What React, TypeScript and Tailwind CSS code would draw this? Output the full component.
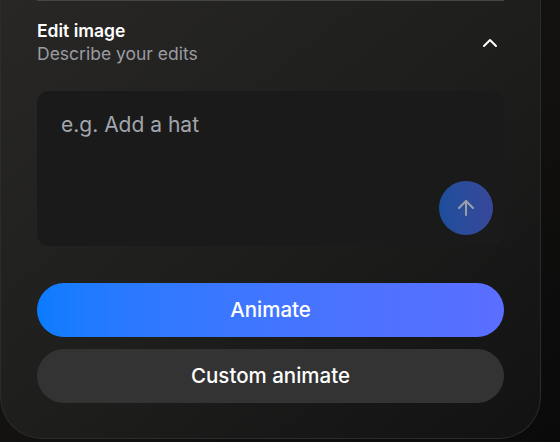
import { ArrowUp, ChevronUp } from "lucide-react";

export default function App() {
  return (
    <main
      className="h-[442px] w-[560px] overflow-hidden bg-gradient-to-br from-[#1d1a17] to-[#0a0a0a]"
      style={{ fontFamily: "Inter, 'Noto Sans', sans-serif" }}
    >
      <section className="flex h-[439px] w-[541px] flex-col rounded-b-[42px] border-x border-b border-[#2c2c2c] bg-gradient-to-br from-[#282725] via-[#1e1e1d] to-[#121212] px-9">
        <div className="h-px bg-[#454545]" />

        <div className="mt-[19px] flex items-center justify-between">
          <div>
            <h2 className="text-[17.5px] font-semibold leading-[22px] text-white">
              Edit image
            </h2>
            <p className="text-[17.5px] leading-[24px] text-[#9a9ca2]">
              Describe your edits
            </p>
          </div>
          <ChevronUp className="mr-[2px] h-6 w-6 text-white" strokeWidth={2} />
        </div>

        <div className="mt-[25px] flex h-[155px] flex-col rounded-xl bg-[#1a1a1a] px-6 pt-[20px] pb-[11px]">
          <p className="text-[21px] leading-[28px] text-[#a2a6ad]">e.g. Add a hat</p>
          <div className="mt-auto flex justify-end">
            <button className="-mr-[13px] flex h-[54px] w-[54px] items-center justify-center rounded-full bg-gradient-to-r from-[#1b4f9c] to-[#38479a]">
              <ArrowUp className="h-6 w-6 text-[#9aa0aa]" strokeWidth={2} />
            </button>
          </div>
        </div>

        <button className="mt-[37px] h-[54px] w-full rounded-full bg-gradient-to-r from-[#0a7cff] to-[#5b6eff] text-[20.5px] font-medium text-white">
          Animate
        </button>
        <button className="mt-3 h-[54px] w-full rounded-full bg-[#333333] text-[20.5px] font-medium text-white">
          Custom animate
        </button>
      </section>
    </main>
  );
}
